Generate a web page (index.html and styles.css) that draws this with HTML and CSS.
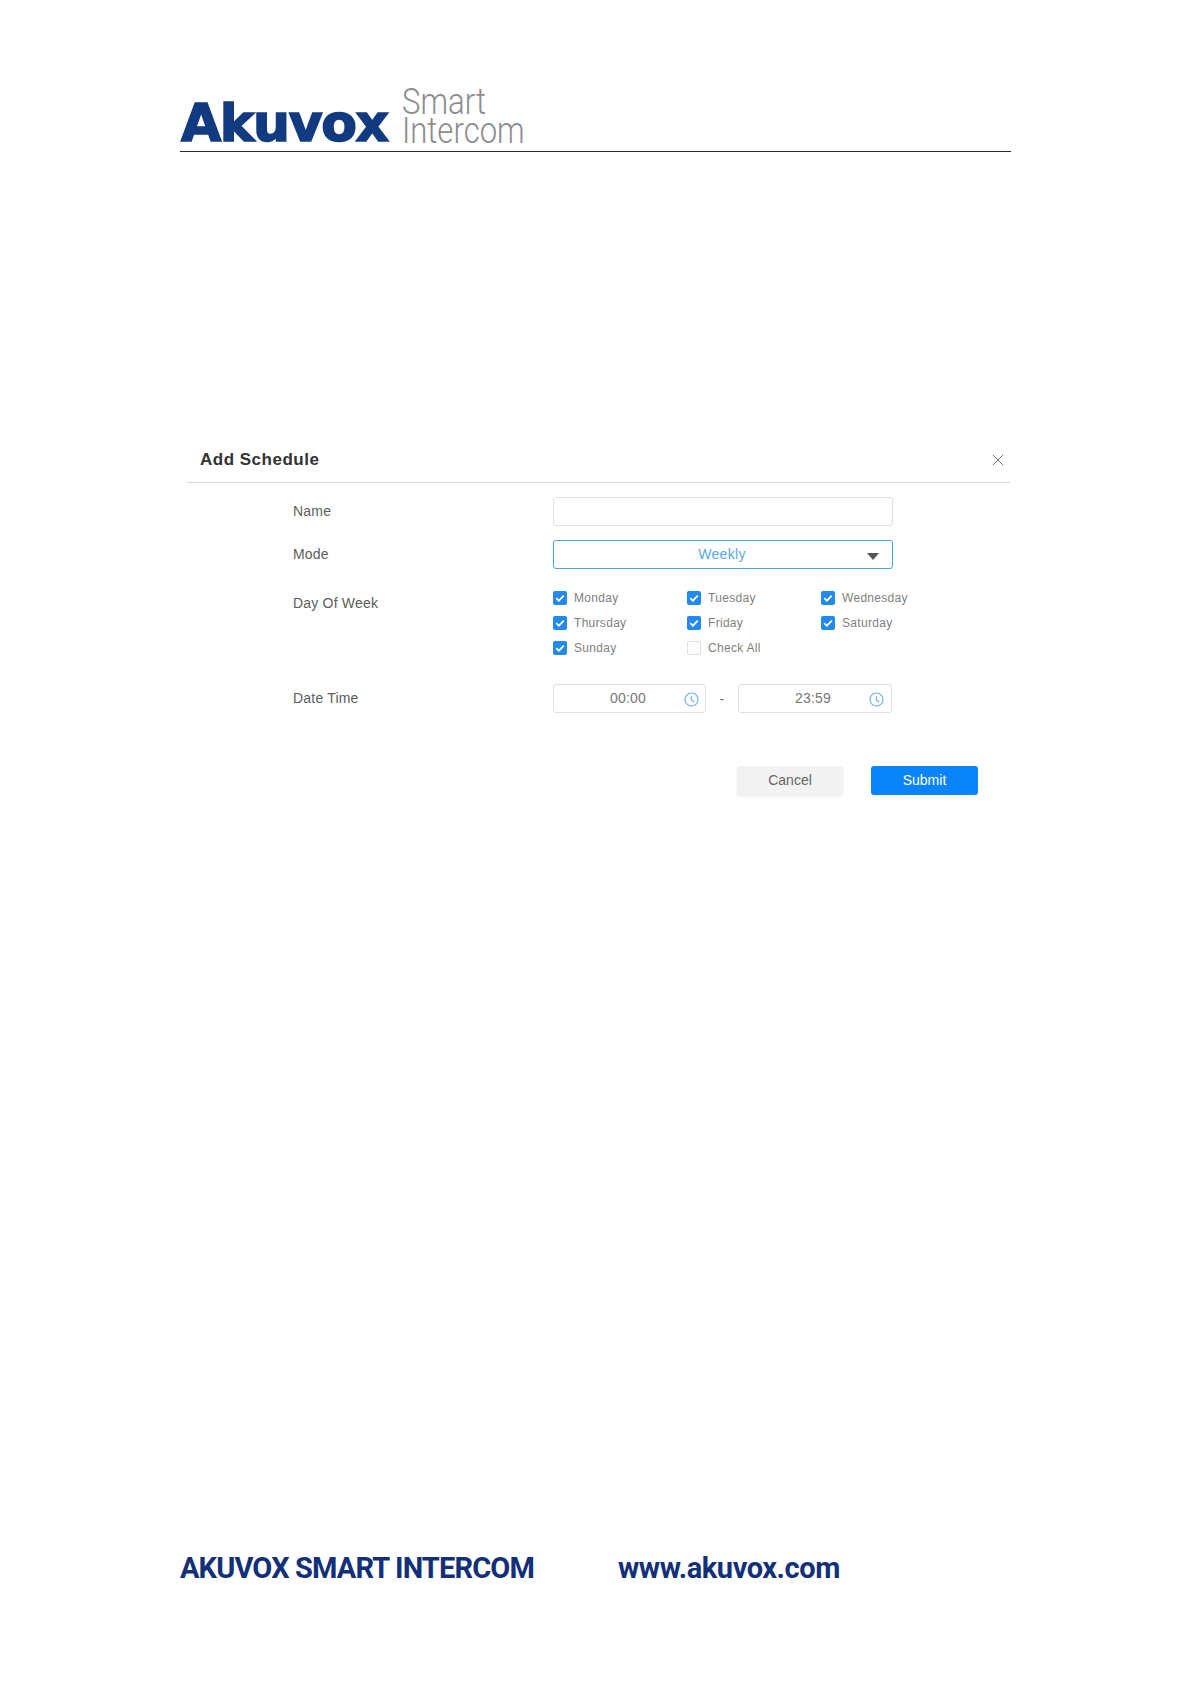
FILE: index.html
```html
<!DOCTYPE html>
<html lang="en">
<head>
<meta charset="utf-8">
<title>Add Schedule</title>
<link rel="stylesheet" href="styles.css">
</head>
<body>
<div class="page">
  <header class="brand">
    <div class="logo">
      <span class="logo-main">Akuvox</span>
      <span class="logo-sub"><span>Smart</span><span>Intercom</span></span>
    </div>
  </header>

  <section class="dialog">
    <div class="dialog-head">
      <h2 class="dialog-title">Add Schedule</h2>
      <svg class="close" width="12" height="12" viewBox="0 0 12 12"><path d="M1 1l10 10M11 1L1 11" fill="none" stroke="#777" stroke-width="1"/></svg>
    </div>
    <div class="form">
      <div class="row row-name">
        <div class="label">Name</div>
        <div class="input"></div>
      </div>
      <div class="row row-mode">
        <div class="label">Mode</div>
        <div class="input select"><span class="select-text">Weekly</span><span class="caret"></span></div>
      </div>
      <div class="row row-days">
        <div class="label label-days">Day Of Week</div>
        <div class="days">
          <div class="day"><span class="box on"><svg viewBox="0 0 14 14"><path d="M3.2 7.2l2.7 2.5 4.9-5" /></svg></span>Monday</div>
          <div class="day"><span class="box on"><svg viewBox="0 0 14 14"><path d="M3.2 7.2l2.7 2.5 4.9-5" /></svg></span>Tuesday</div>
          <div class="day"><span class="box on"><svg viewBox="0 0 14 14"><path d="M3.2 7.2l2.7 2.5 4.9-5" /></svg></span>Wednesday</div>
          <div class="day"><span class="box on"><svg viewBox="0 0 14 14"><path d="M3.2 7.2l2.7 2.5 4.9-5" /></svg></span>Thursday</div>
          <div class="day"><span class="box on"><svg viewBox="0 0 14 14"><path d="M3.2 7.2l2.7 2.5 4.9-5" /></svg></span>Friday</div>
          <div class="day"><span class="box on"><svg viewBox="0 0 14 14"><path d="M3.2 7.2l2.7 2.5 4.9-5" /></svg></span>Saturday</div>
          <div class="day"><span class="box on"><svg viewBox="0 0 14 14"><path d="M3.2 7.2l2.7 2.5 4.9-5" /></svg></span>Sunday</div>
          <div class="day"><span class="box"></span>Check All</div>
        </div>
      </div>
      <div class="row row-time">
        <div class="label">Date Time</div>
        <div class="times">
          <div class="input time"><span class="time-text">00:00</span><svg class="clock" width="15" height="15" viewBox="0 0 15 15"><circle cx="7.5" cy="7.5" r="6.5"/><path d="M7.3 3.8v4l2.8 2.2"/></svg></div>
          <span class="dash">-</span>
          <div class="input time time-end"><span class="time-text">23:59</span><svg class="clock" width="15" height="15" viewBox="0 0 15 15"><circle cx="7.5" cy="7.5" r="6.5"/><path d="M7.3 3.8v4l2.8 2.2"/></svg></div>
        </div>
      </div>
    </div>
    <div class="actions">
      <button class="btn btn-cancel">Cancel</button>
      <button class="btn btn-submit">Submit</button>
    </div>
  </section>

  <footer class="foot">
    <span class="foot-name">AKUVOX SMART INTERCOM</span>
    <span class="foot-url">www.akuvox.com</span>
  </footer>
</div>
</body>
</html>
```
FILE: styles.css
```css
* { box-sizing: border-box; }
html, body { margin: 0; padding: 0; background: #fff; }
.page {
  width: 1191px;
  height: 1684px;
  padding: 0 180px;
  display: flex;
  flex-direction: column;
  font-family: "Liberation Sans", Arial, sans-serif;
  overflow: hidden;
}
.brand {
  width: 831px;
  height: 152px;
  border-bottom: 1.5px solid #2b2b2b;
  padding-top: 84px;
  flex: none;
}
.logo { display: flex; align-items: flex-start; height: 66px; }
.logo-main {
  font-family: "DejaVu Sans", sans-serif;
  font-weight: 700;
  font-size: 52px;
  line-height: 66px;
  margin: 6px 0 0 1px;
  letter-spacing: -1.4px;
  color: #123a80;
  -webkit-text-stroke: 1.6px #123a80;
  width: 221px;
  flex: none;
}
.logo-sub {
  display: flex;
  flex-direction: column;
  margin-top: 3px;
  font-family: Roboto, sans-serif;
  font-weight: 300;
  font-size: 37px;
  line-height: 29px;
  color: #8b8d8f;
  transform: scaleX(0.84);
  transform-origin: left top;
}
.dialog {
  width: 823px;
  margin: 286px 0 0 7px;
  flex: none;
}
.dialog-head {
  height: 45px;
  border-bottom: 1px solid #d9d9d9;
  padding: 0 6px 0 13px;
  display: flex;
  align-items: center;
  justify-content: space-between;
}
.dialog-title {
  margin: 0;
  font-size: 17px;
  font-weight: 700;
  letter-spacing: 0.5px;
  color: #333;
}
.form { padding: 14px 0 0 106px; }
.row { display: flex; }
.label {
  width: 260px;
  flex: none;
  font-size: 14px;
  line-height: 29px;
  letter-spacing: 0.2px;
  color: #5c5c5c;
}
.row-mode { margin-top: 14px; }
.row-days { margin-top: 16px; }
.label-days { line-height: 24px; padding-top: 6px; }
.row-time { margin-top: 24px; }
.input {
  width: 340px;
  height: 29px;
  border: 1px solid #dcdfe6;
  border-radius: 3px;
  background: #fff;
}
.select {
  border-color: #4ba3d9;
  position: relative;
  display: flex;
  align-items: center;
  justify-content: center;
  color: #5aa9e6;
  font-size: 14px;
}
.select-text { letter-spacing: 0.3px; margin: -2px 2px 0 0; }
.caret {
  position: absolute;
  right: 13px;
  top: 12px;
  border-style: solid;
  border-width: 7px 6.5px 0;
  border-color: #555 transparent transparent;
}
.days {
  display: grid;
  grid-template-columns: repeat(3, 134px);
  grid-auto-rows: 25px;
}
.day {
  display: flex;
  align-items: center;
  gap: 7px;
  font-size: 12px;
  letter-spacing: 0.3px;
  color: #808080;
  height: 25px;
  white-space: nowrap;
}
.box {
  width: 14px;
  height: 14px;
  border: 1px solid #dcdfe6;
  border-radius: 2px;
  flex: none;
  background: #fff;
}
.box.on { background: #2289ee; border: 0; }
.box svg { display: block; width: 14px; height: 14px; }
.box svg path { fill: none; stroke: #fff; stroke-width: 1.7; }
.times { display: flex; align-items: center; }
.time {
  width: 153px;
  display: flex;
  align-items: center;
  padding: 0 6px 0 56px;
  justify-content: space-between;
  font-size: 14px;
  color: #777;
}
.time-end { width: 154px; padding-right: 7px; }
.time-text { letter-spacing: 0.2px; margin-top: -2px; }
.clock { margin-top: 2px; }
.clock circle, .clock path { fill: none; stroke: #6aaedf; stroke-width: 1.1; }
.dash {
  width: 32px;
  text-align: center;
  font-size: 13px;
  color: #666;
}
.actions {
  display: flex;
  justify-content: flex-end;
  gap: 28px;
  padding: 53px 32px 0 0;
}
.btn {
  width: 107px;
  height: 29px;
  border: 0;
  border-radius: 3px;
  padding: 0;
  font-family: inherit;
  font-size: 14px;
}
.btn-cancel { background: #f2f2f2; color: #666; width: 106px; height: 30px; padding-bottom: 2px; box-shadow: 0 1px 2px rgba(0,0,0,0.05); }
.btn-submit { background: #0a84fb; color: #fff; padding-bottom: 1px; }
.foot {
  margin-top: 754px;
  display: flex;
  font-family: Roboto, sans-serif;
  font-weight: 700;
  font-size: 29px;
  line-height: 36px;
  color: #12307a;
}
.foot-name { width: 438px; letter-spacing: -0.86px; white-space: nowrap; }
.foot-url { letter-spacing: -0.45px; white-space: nowrap; }
```
